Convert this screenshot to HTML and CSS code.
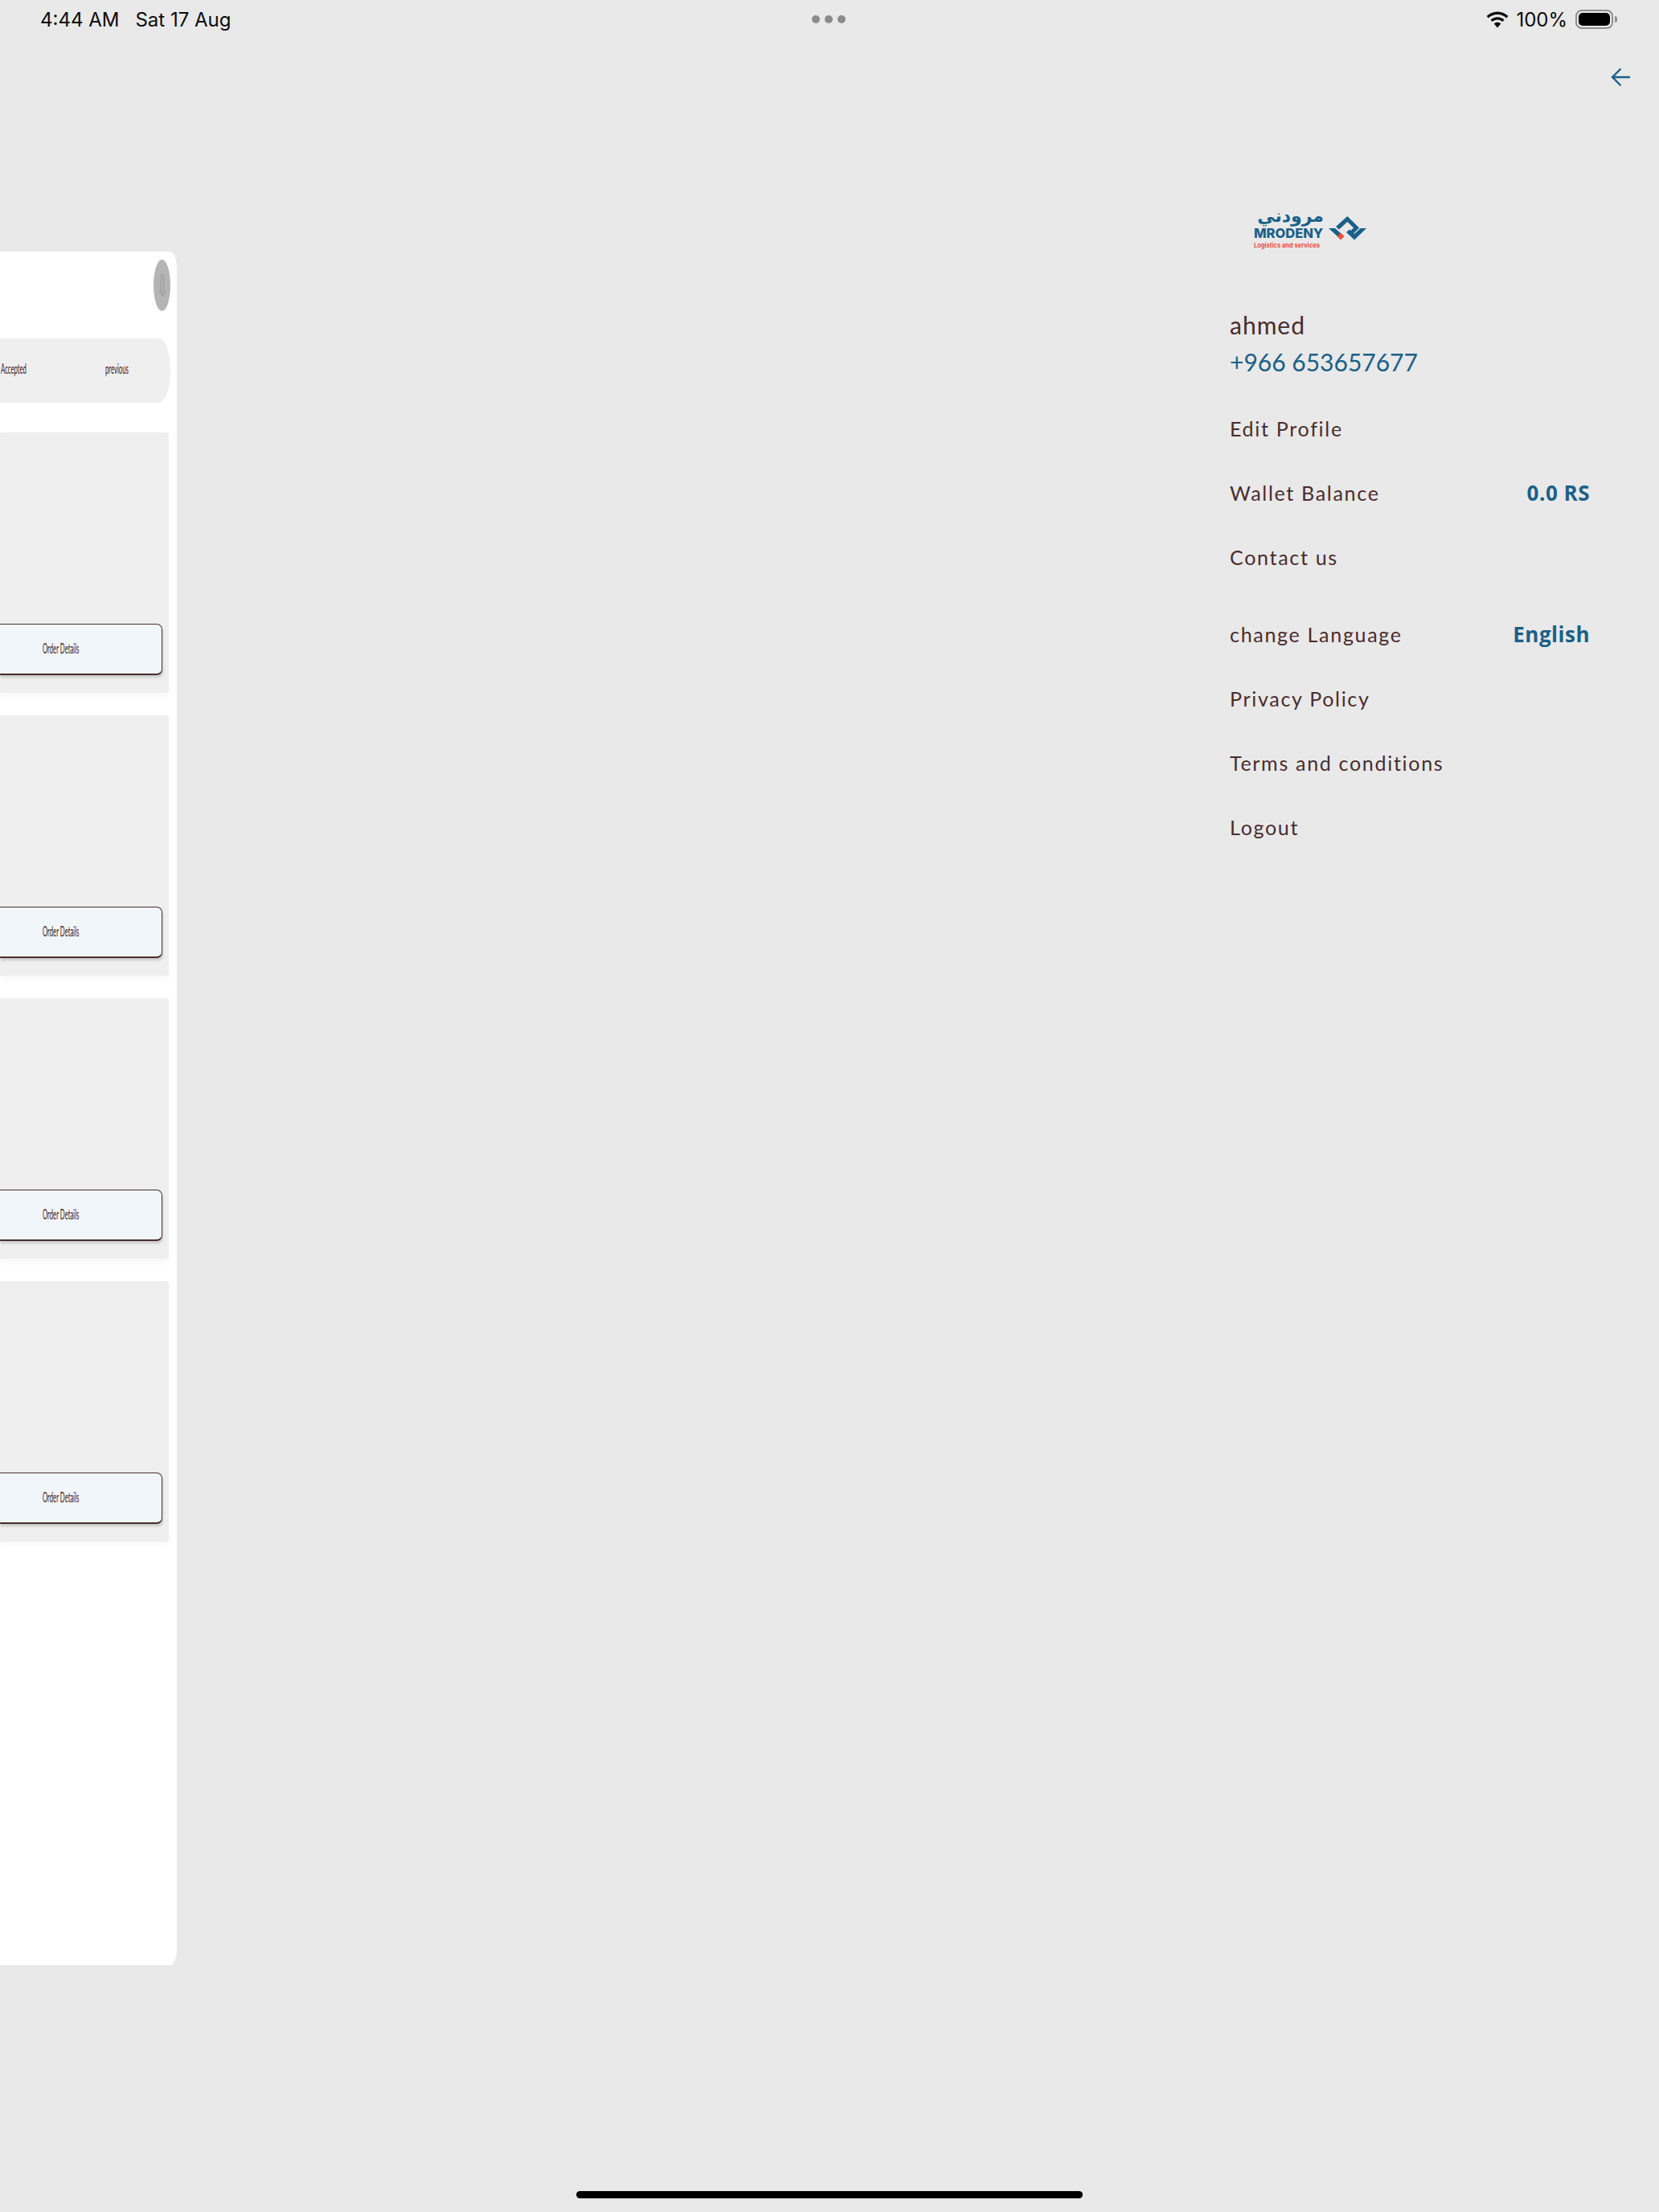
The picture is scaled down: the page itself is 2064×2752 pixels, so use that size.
FILE: index.html
```html
<!DOCTYPE html>
<html lang="en">
<head>
<meta charset="utf-8">
<title>Mrodeny</title>
<link rel="stylesheet" href="styles.css">
</head>
<body>
<div class="app">
  <header class="status">
    <div class="status-left"><span>4:44 AM</span><span>Sat 17 Aug</span></div>
    <div class="dots"><i></i><i></i><i></i></div>
    <div class="status-right">
      <svg class="wifi" width="28" height="21" viewBox="0 0 28 21"><path d="M14 0.5C8.800 0.500 4.200 2.600 0.600 6l2.200 2.400C5.800 5.600 9.700 3.900 14 3.900s8.200 1.700 11.200 4.500L27.400 6C23.800 2.600 19.200 0.500 14 0.500z"/><path d="M14 7.200c-3.300 0-6.300 1.300-8.600 3.400l2.300 2.400c1.700-1.500 3.900-2.500 6.300-2.500s4.600 1 6.300 2.500l2.300-2.400C20.300 8.500 17.300 7.200 14 7.200z"/><path d="M14 13.800c-1.600 0-3.100 0.600-4.300 1.700L14 20.500l4.300-5c-1.200-1.100-2.700-1.700-4.300-1.700z"/></svg>
      <span class="pct">100%</span>
      <div class="battery"><div class="battery-fill"></div></div>
      <div class="battery-nub"></div>
    </div>
  </header>

  <main class="main">
    <section class="panel">
      <div class="panel-top">
        <div class="bell">
          <svg width="8" height="30" viewBox="0 0 8 30"><path d="M4 1C2.800 1 2 5 2 9v11L0.700 24h6.600L6 20V9C6 5 5.200 1 4 1z" fill="#b0b0b0" stroke="#9b9b9b"/><rect x="3" y="25" width="2" height="4" fill="#9b9b9b"/></svg>
        </div>
      </div>
      <div class="tabs">
        <span class="squish tab-a">Accepted</span>
        <span class="squish tab-b">previous</span>
      </div>
      <div class="cards">
        <article class="card"><div class="card-btn"><span class="squish btn-label">Order Details</span></div></article>
        <article class="card"><div class="card-btn"><span class="squish btn-label">Order Details</span></div></article>
        <article class="card"><div class="card-btn"><span class="squish btn-label">Order Details</span></div></article>
        <article class="card"><div class="card-btn"><span class="squish btn-label">Order Details</span></div></article>
      </div>
    </section>

    <div class="spacer"></div>

    <nav class="drawer">
      <div class="logo">
        <div class="logo-text">
          <div class="logo-ar" dir="rtl">مرودني</div>
          <div class="logo-en">MRODENY</div>
          <div class="logo-sub">Logistics and services</div>
        </div>
        <svg class="logo-mark" width="47" height="30" viewBox="0 0 47 30">
          <path fill="#1a6088" d="M23.300 0L38 14.500 30 22.500 26.500 19 31 14.500 23.300 7 13 16.500 9 13z"/>
          <path fill="#1a6088" d="M39.500 15H47L32 29.500 22 20l4-3.500 6 5.500z"/>
          <path fill="#1a6088" d="M0 15h8l9 8-4 4z"/>
          <path fill="#ea4f3a" d="M15 20.500l4.500 4.500-4.500 4.500-4.500-4.500z"/>
        </svg>
      </div>
      <div class="name">ahmed</div>
      <div class="phone">+966 653657677</div>
      <div class="rows">
        <a class="row">Edit Profile</a>
        <a class="row">Wallet Balance<b class="val">0.0 RS</b></a>
        <a class="row">Contact us</a>
        <a class="row row-gap">change Language<b class="val">English</b></a>
        <a class="row">Privacy Policy</a>
        <a class="row">Terms and conditions</a>
        <a class="row">Logout</a>
      </div>
    </nav>

    <div class="back">
      <svg width="24" height="24" viewBox="0 0 24 24" fill="none" stroke="#1a6088" stroke-width="2.400"><path d="M24 12H2M12.500 1.500L2 12l10.500 10.500"/></svg>
    </div>
  </main>

  <footer class="home"><div class="home-bar"></div></footer>
</div>
</body>
</html>
```
FILE: styles.css
```css
* { box-sizing: border-box; }
html, body { margin: 0; padding: 0; }
body { width: 2064px; height: 2752px; overflow: hidden; background: #e9e9e9; font-family: "Lato", "Noto Sans", sans-serif; }
.app { height: 2752px; display: flex; flex-direction: column; }

/* status bar */
.status { height: 48px; display: grid; grid-template-columns: 1fr auto 1fr; align-items: center; padding: 0 52px 0 50px; font-family: "Inter", "Liberation Sans", sans-serif; font-size: 24px; color: #0b0b0b; }
.status-left { display: flex; gap: 20px; }
.dots { display: flex; gap: 6px; }
.dots i { width: 10px; height: 10px; border-radius: 50%; background: #8c8c8c; }
.status-right { display: flex; align-items: center; justify-content: flex-end; }
.wifi { margin-right: 9px; fill: #0b0b0b; }
.pct { margin-right: 10px; }
.battery { width: 47px; height: 24px; border: 2px solid #8f8f8f; border-radius: 8px; padding: 2px; }
.battery-fill { height: 100%; background: #000; border-radius: 5px; }
.battery-nub { width: 3px; height: 8px; margin-left: 2px; background: #8f8f8f; border-radius: 0 3px 3px 0; }

/* main */
.main { flex: 1; display: flex; align-items: flex-start; }
.spacer { flex: 1; }

/* squeezed panel */
.panel { width: 220px; height: 2132px; margin-top: 265px; background: #fff; border-radius: 0 8px 8px 0 / 0 22px 22px 0; padding-right: 8px; overflow: hidden; }
.panel-top { height: 108px; padding-top: 10px; display: flex; justify-content: flex-end; }
.bell { width: 21px; height: 64px; border-radius: 50%; background: #b5b5b5; display: flex; align-items: center; justify-content: center; }
.tabs { position: relative; height: 80px; background: #efefef; border-radius: 0 14px 14px 0 / 0 40px 40px 0; }
.squish { position: absolute; white-space: nowrap; color: #3d2020; font-size: 18px; font-weight: 400; transform: scaleX(.43); transform-origin: left center; }
.tab-a { left: 1px; top: 26px; }
.tab-b { left: 131px; top: 26px; }
.cards { margin-top: 37px; margin-right: 2px; display: flex; flex-direction: column; gap: 28px; }
.card { position: relative; height: 324px; background: #efefef; border-radius: 0 3px 3px 0; box-shadow: 0 4px 8px rgba(0,0,0,.03); }
.card-btn { position: absolute; left: 0; right: 8px; top: 238px; height: 64px; background: #f0f6f9; border: 1px solid #4a2c2c; border-left: 0; border-bottom-width: 2px; border-radius: 0 7px 7px 0; box-shadow: 1px 3px 3px rgba(0,0,0,.15); }
.btn-label { left: 53px; top: 18px; }

/* drawer */
.drawer { width: 448px; padding-top: 210px; color: #4a2c2c; }
.logo { height: 55px; margin-left: 30px; display: flex; gap: 6px; }
.logo-text { width: 87px; }
.logo-ar { font-family: "DejaVu Sans", sans-serif; font-weight: 700; font-size: 22px; line-height: 22px; height: 22px; color: #1a6088; text-align: right; }
.logo-en { font-family: "Inter", sans-serif; font-weight: 800; font-size: 16.500px; line-height: 20px; color: #1a6088; }
.logo-sub { font-family: "Inter", sans-serif; font-weight: 700; font-size: 7.500px; line-height: 10px; margin-top: 1px; color: #ea4f3a; white-space: nowrap; }
.logo-mark { margin-top: 11px; }
.name { margin-top: 68px; height: 46px; line-height: 46px; font-size: 30px; letter-spacing: 1px; }
.phone { height: 46px; line-height: 46px; font-size: 30px; color: #1a6088; }
.rows { margin-top: 20px; }
.row { height: 80px; display: flex; align-items: center; justify-content: space-between; font-size: 25px; letter-spacing: 1.700px; }
.row-gap { margin-top: 16px; }
.val { font-family: "Open Sans", sans-serif; font-size: 26px; font-weight: 700; letter-spacing: 0.500px; color: #1a6088; }

/* back arrow */
.back { width: 86px; padding: 36px 0 0 26px; }

/* home indicator */
.home { height: 38px; display: flex; justify-content: center; align-items: flex-start; padding-top: 12px; }
.home-bar { width: 630px; height: 9px; background: #000; border-radius: 5px; }
```
